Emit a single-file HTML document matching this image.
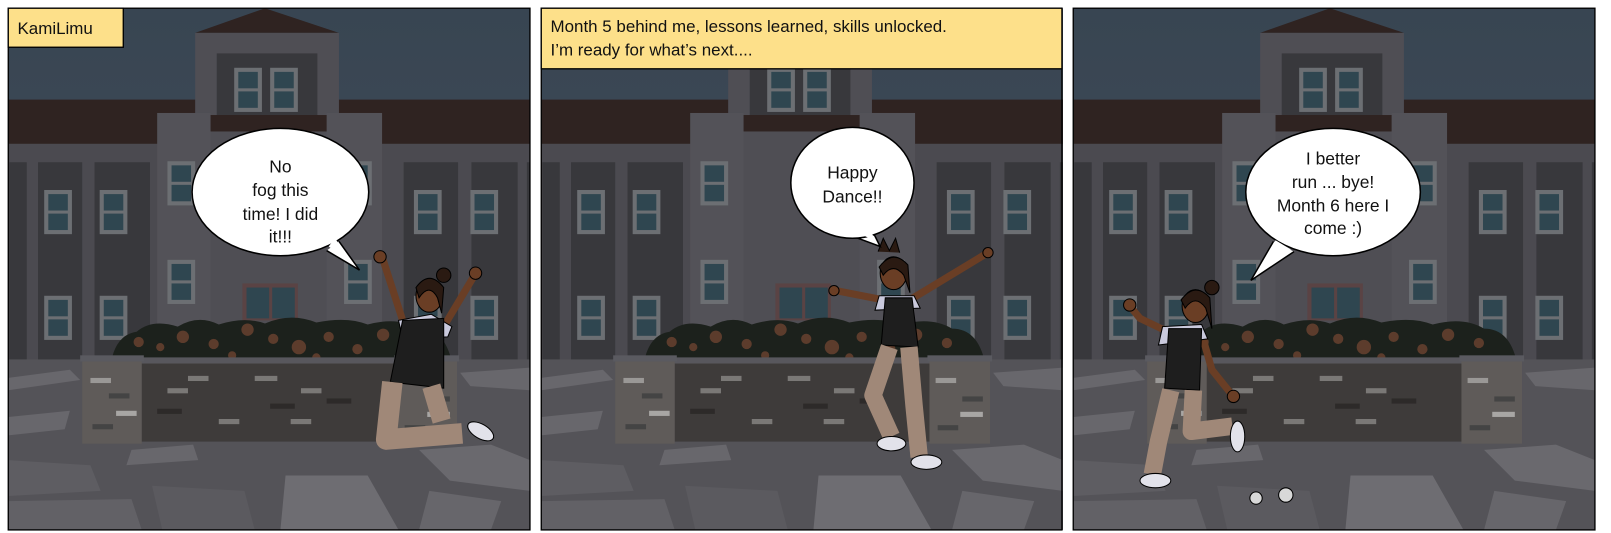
<!DOCTYPE html>
<html><head><meta charset="utf-8"><style>
html,body{margin:0;padding:0;background:#fff;width:1611px;height:533px;overflow:hidden}
svg{display:block}
text{font-family:"Liberation Sans",sans-serif;fill:#111}
</style></head><body>
<svg width="1611" height="533" viewBox="0 0 1568.6 519" xmlns="http://www.w3.org/2000/svg">
<defs>
<linearGradient id="sky" x1="0" y1="0" x2="0" y2="1"><stop offset="0" stop-color="#384552"/><stop offset="1" stop-color="#46505c"/></linearGradient>
<clipPath id="cp"><rect width="508" height="508"/></clipPath>
<g id="win"><rect width="27" height="43" fill="#6c6f73"/><rect x="4" y="4" width="19" height="16" fill="#2f4650"/><rect x="4" y="23" width="19" height="16" fill="#2f4650"/></g>
<g id="bg">
<rect width="508" height="508" fill="url(#sky)"/>
<rect y="89" width="508" height="45" fill="#2f2321"/>
<rect y="132" width="508" height="215" fill="#4b4a50"/>
<rect x="1" y="150" width="17" height="192" fill="#38383c"/>
<rect x="29" y="150" width="43" height="192" fill="#38383c"/>
<rect x="84" y="150" width="54" height="192" fill="#38383c"/>
<rect x="385" y="150" width="53" height="192" fill="#38383c"/>
<rect x="451" y="150" width="45" height="192" fill="#38383c"/>
<rect x="505" y="150" width="10" height="192" fill="#38383c"/>
<use href="#win" x="35" y="177"/><use href="#win" x="89" y="177"/><use href="#win" x="395" y="177"/><use href="#win" x="450" y="177"/>
<use href="#win" x="35" y="280"/><use href="#win" x="89" y="280"/><use href="#win" x="395" y="280"/><use href="#win" x="450" y="280"/>
<polygon points="182,24 322,24 250,0" fill="#2f2321"/>
<rect x="182" y="24" width="140" height="320" fill="#4f4e54"/>
<rect x="203" y="44" width="98" height="70" fill="#38383c"/>
<use href="#win" x="220" y="58"/><use href="#win" x="255" y="58"/>
<rect x="145" y="102" width="52" height="240" fill="#535258"/>
<rect x="310" y="102" width="54" height="240" fill="#535258"/>
<rect x="197" y="104" width="113" height="16" fill="#2f2321"/>
<use href="#win" x="155" y="149"/><use href="#win" x="155" y="245"/>
<use href="#win" x="327" y="149"/><use href="#win" x="327" y="245"/>
<rect x="228" y="268" width="54" height="36" fill="#5a4344"/><rect x="232" y="272" width="22" height="30" fill="#2f4650"/><rect x="257" y="272" width="22" height="30" fill="#2f4650"/>
<rect y="342" width="508" height="166" fill="#545358"/>
<polygon points="0,360 60,352 70,362 0,372" fill="#68676c"/>
<polygon points="440,355 508,350 508,372 450,368" fill="#68676c"/>
<polygon points="0,398 60,392 55,410 0,416" fill="#68676c"/>
<polygon points="120,430 180,425 185,440 115,445" fill="#68676c"/>
<polygon points="0,440 80,445 90,470 0,475" fill="#5e5d62"/>
<polygon points="270,455 350,455 380,508 265,508" fill="#6e6d72"/>
<polygon points="400,430 470,425 508,440 508,470 430,460" fill="#6a696e"/>
<polygon points="0,480 120,478 130,508 0,508" fill="#626166"/>
<polygon points="140,465 230,470 240,508 150,508" fill="#5b5a5f"/>
<polygon points="410,470 480,480 470,508 400,508" fill="#67666b"/>
<path d="M100,345 Q105,318 125,315 Q140,302 165,310 Q185,298 205,308 Q230,300 250,307 Q275,296 300,306 Q330,300 350,308 Q380,300 400,312 Q425,312 432,345 Z" fill="#1c211c"/>
<g fill="#5c3c2c"><circle cx="127" cy="325" r="5"/><circle cx="148" cy="330" r="4"/><circle cx="170" cy="320" r="6"/><circle cx="200" cy="327" r="5"/><circle cx="233" cy="313" r="6"/><circle cx="258" cy="322" r="5"/><circle cx="283" cy="330" r="7"/><circle cx="312" cy="320" r="5"/><circle cx="340" cy="332" r="5"/><circle cx="365" cy="318" r="6"/><circle cx="395" cy="326" r="5"/><circle cx="218" cy="338" r="4"/><circle cx="300" cy="340" r="4"/></g>
<rect x="125" y="340" width="260" height="6" fill="#58575d"/>
<rect x="125" y="346" width="260" height="76" fill="#3e3b3a"/>
<g fill="#7a7876"><rect x="155" y="370" width="20" height="5"/><rect x="240" y="358" width="22" height="5"/><rect x="285" y="370" width="20" height="5"/><rect x="205" y="400" width="20" height="5"/><rect x="275" y="400" width="20" height="5"/><rect x="175" y="358" width="20" height="5"/></g>
<g fill="#2d2a29"><rect x="145" y="390" width="24" height="5"/><rect x="255" y="385" width="24" height="5"/><rect x="310" y="380" width="24" height="5"/></g>
<rect x="70" y="338" width="62" height="6" fill="#5a5a60"/>
<rect x="72" y="344" width="58" height="80" fill="#5f5b59"/>
<rect x="80" y="360" width="20" height="5" fill="#9a9896"/><rect x="98" y="375" width="20" height="5" fill="#444"/><rect x="105" y="392" width="20" height="5" fill="#a8a6a4"/><rect x="82" y="405" width="20" height="5" fill="#444"/>
<rect x="376" y="338" width="63" height="6" fill="#5a5a60"/>
<rect x="378" y="344" width="59" height="80" fill="#5f5b59"/>
<rect x="384" y="360" width="20" height="5" fill="#9a9896"/><rect x="410" y="378" width="20" height="5" fill="#444"/><rect x="408" y="393" width="22" height="5" fill="#a8a6a4"/><rect x="386" y="406" width="20" height="5" fill="#444"/>
</g>
</defs>

<g transform="translate(8,8)"><g clip-path="url(#cp)"><use href="#bg"/></g><rect width="508" height="508" fill="none" stroke="#000" stroke-width="1.3"/></g>
<g transform="translate(527,8)"><g clip-path="url(#cp)"><use href="#bg"/></g><rect width="507" height="508" fill="none" stroke="#000" stroke-width="1.3"/></g>
<g transform="translate(1045,8)"><g clip-path="url(#cp)"><use href="#bg"/></g><rect width="508" height="508" fill="none" stroke="#000" stroke-width="1.3"/></g>

<!-- captions -->
<rect x="8" y="8" width="112" height="38" fill="#fde08a" stroke="#000" stroke-width="1.3"/>
<text x="17" y="33" font-size="16.5">KamiLimu</text>
<rect x="527" y="8" width="507" height="59" fill="#fde08a" stroke="#000" stroke-width="1.3"/>
<text x="536" y="31" font-size="16.5">Month 5 behind me, lessons learned, skills unlocked.</text>
<text x="536" y="54" font-size="16.5">I’m ready for what’s next....</text>

<!-- figures -->
<g stroke="#000" stroke-width="1">
<!-- P1 -->
<path d="M394,318 L372,250 M432,318 L462,268" stroke="#6a3e25" stroke-width="7" fill="none"/>
<circle cx="370" cy="250" r="6" fill="#6a3e25"/><circle cx="463" cy="266" r="6" fill="#6a3e25"/>
<circle cx="432" cy="268" r="7" fill="#2a1a12"/>
<ellipse cx="418" cy="288" rx="13" ry="16" fill="#6a3e25"/>
<path d="M405,280 Q418,262 432,280 L430,305 L426,290 Q418,275 408,290 Z" fill="#2a1a12"/>
<polygon points="388,312 420,306 440,318 436,328 392,330" fill="#c9c9dc"/>
<polygon points="392,312 432,310 432,378 380,372" fill="#1e1e1e"/>
<path d="M382,372 L376,428 L450,422" stroke="#a08878" stroke-width="20" fill="none" stroke-linejoin="round"/>
<path d="M420,376 L430,410" stroke="#a08878" stroke-width="18" fill="none"/>
<ellipse cx="468" cy="420" rx="14" ry="7" fill="#e2e2ea" transform="rotate(30 468 420)"/>
<!-- P2 -->
<path d="M860,292 L814,283 M886,292 L962,246" stroke="#6a3e25" stroke-width="7" fill="none"/>
<circle cx="812" cy="283" r="5" fill="#6a3e25"/><circle cx="962" cy="246" r="5" fill="#6a3e25"/>
<path d="M855,245 L860,232 L866,244 L872,232 L876,246" fill="#2a1a12"/>
<ellipse cx="870" cy="266" rx="13" ry="16" fill="#6a3e25"/>
<path d="M856,260 Q870,242 884,258 L886,285 L880,268 Q870,255 860,268 Z" fill="#2a1a12"/>
<polygon points="856,288 890,288 896,300 852,302" fill="#c9c9dc"/>
<polygon points="862,290 888,290 894,338 858,336" fill="#1e1e1e"/>
<path d="M866,338 L850,385 L868,425 M885,338 L890,395 L895,445" stroke="#a08878" stroke-width="17" fill="none" stroke-linejoin="round"/>
<ellipse cx="868" cy="432" rx="14" ry="7" fill="#e2e2ea"/><ellipse cx="902" cy="450" rx="15" ry="7" fill="#e2e2ea"/>
<!-- P3 -->
<path d="M1135,322 L1110,310 L1100,298 M1170,325 L1180,360 L1200,385" stroke="#6a3e25" stroke-width="7" fill="none"/>
<circle cx="1100" cy="297" r="6" fill="#6a3e25"/><circle cx="1201" cy="386" r="6" fill="#6a3e25"/>
<circle cx="1180" cy="280" r="7" fill="#2a1a12"/>
<ellipse cx="1164" cy="298" rx="13" ry="16" fill="#6a3e25"/>
<path d="M1150,292 Q1164,274 1178,290 L1180,320 L1174,300 Q1164,286 1154,300 Z" fill="#2a1a12"/>
<polygon points="1132,318 1170,316 1176,330 1128,336" fill="#c9c9dc"/>
<polygon points="1138,320 1170,320 1168,380 1134,378" fill="#1e1e1e"/>
<path d="M1140,380 L1128,430 L1122,462 M1162,380 L1160,420 L1200,415" stroke="#a08878" stroke-width="17" fill="none" stroke-linejoin="round"/>
<ellipse cx="1125" cy="468" rx="15" ry="7" fill="#e2e2ea"/><ellipse cx="1205" cy="425" rx="7" ry="15" fill="#e2e2ea"/>
<circle cx="1223" cy="485" r="6" fill="#d8d8d8"/><circle cx="1252" cy="482" r="7" fill="#d8d8d8"/>
</g>

<!-- bubbles -->
<g fill="#fff" stroke="#000" stroke-width="1.5">
<path d="M330,235 L350,263 L318,244"/>
<ellipse cx="273" cy="187" rx="86" ry="62"/>
<path d="M848,222 L857,240 L830,230"/>
<ellipse cx="830" cy="178" rx="60" ry="54"/>
<path d="M1240,235 L1218,273 L1260,245"/>
<ellipse cx="1298" cy="187" rx="85" ry="62"/>
</g>
<g fill="#fff"><path d="M326,232 L345,258 L320,240 Z"/><path d="M845,220 L853,235 L834,226Z"/><path d="M1242,234 L1224,265 L1257,243Z"/></g>
<g font-size="17" text-anchor="middle">
<text x="273" y="168">No</text><text x="273" y="191">fog this</text><text x="273" y="214">time! I did</text><text x="273" y="236">it!!!</text>
<text x="830" y="174">Happy</text><text x="830" y="197">Dance!!</text>
<text x="1298" y="160">I better</text><text x="1298" y="183">run ... bye!</text><text x="1298" y="206">Month 6 here I</text><text x="1298" y="228">come :)</text>
</g>
</svg>
</body></html>
